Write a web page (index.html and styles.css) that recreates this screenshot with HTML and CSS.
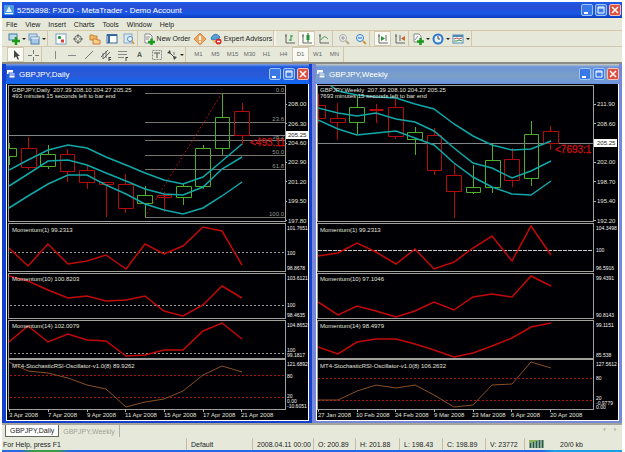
FILE: index.html
```html
<!DOCTYPE html>
<html lang="en">
<head>
<meta charset="utf-8">
<title>5255898: FXDD - MetaTrader - Demo Account</title>
<link rel="stylesheet" href="styles.css">
</head>
<body>
<div class="app">
  <header class="titlebar">
    <svg class="logo" viewBox="0 0 10 10"><rect width="10" height="10" rx="1" fill="#4a9be0"/><path d="M5 1 8 7H2Z" fill="#d8f0ff"/><path d="M1 8.500H9M3 5 5 7 7 5" stroke="#fff" fill="none"/></svg>
    <h1>5255898: FXDD - MetaTrader - Demo Account</h1>
    <div class="winbtns">
      <button aria-label="Minimize"><svg viewBox="0 0 12 12"><path d="M3 9H7" stroke="#fff" stroke-width="2"/></svg></button>
      <button aria-label="Maximize"><svg viewBox="0 0 12 12"><path d="M3 3H9V9H3ZM3 4H9" stroke="#fff" fill="none"/></svg></button>
      <button class="close" aria-label="Close"><svg viewBox="0 0 12 12"><path d="M3 3 9 9M9 3 3 9" stroke="#fff" stroke-width="1.500"/></svg></button>
    </div>
  </header>

  <nav class="menu">
    <button>File</button><button>View</button><button>Insert</button><button>Charts</button><button>Tools</button><button>Window</button><button>Help</button>
  </nav>

  <div class="toolbar">
    <div class="group">
      <button class="drop" aria-label="New chart"><svg viewBox="0 0 12 12"><rect x="1" y="1" width="8" height="6" fill="#b9d8ee" stroke="#4a7898"/><path d="M4 8H12M8 4V12" stroke="#1c9a1c" stroke-width="2.500"/></svg></button>
      <button class="drop" aria-label="Profiles"><svg viewBox="0 0 12 12"><rect x="1" y="1" width="8" height="6" fill="#cfe2f2" stroke="#6f96b8"/><rect x="3" y="4" width="8" height="7" fill="#a8c8e8" stroke="#5080b0"/><path d="M3 5H11" stroke="#fff"/></svg></button>
    </div>
    <div class="group">
      <button aria-label="Market watch"><svg viewBox="0 0 12 12"><rect x="1" y="1" width="10" height="10" fill="#fff" stroke="#78a0c0"/><path d="M3 4.500H6M4.500 3V6" stroke="#209838" stroke-width="2"/><path d="M6 8H9" stroke="#d84040" stroke-width="3"/></svg></button>
      <button aria-label="Data window"><svg viewBox="0 0 12 12"><circle cx="6" cy="6" r="3.500" fill="none" stroke="#666"/><path d="M6 1V5M6 7V11M1 6H5M7 6H11" stroke="#666"/></svg></button>
      <button aria-label="Navigator"><svg viewBox="0 0 12 12"><path d="M1 2H4L5 3H8V7H1Z" fill="#f0b860" stroke="#c88030"/><path d="M4 6H7L8 7H11V11H4Z" fill="#f8d088" stroke="#d07840"/></svg></button>
      <button aria-label="Terminal"><svg viewBox="0 0 12 12"><rect x="1" y="2" width="10" height="8" fill="#fff" stroke="#3868a0"/><path d="M3 2V10" stroke="#3868a0" stroke-width="2"/><path d="M1 2H11" stroke="#3868a0" stroke-width="2"/></svg></button>
      <button aria-label="Strategy tester"><svg viewBox="0 0 12 12"><rect x="1" y="1" width="8" height="9" fill="#d8e8f4" stroke="#88a8c8"/><circle cx="7" cy="6" r="2.500" fill="#e8f4ff" stroke="#5888b8"/><path d="M9 8 11 11" stroke="#d09838" stroke-width="1.500"/></svg></button>
    </div>
    <div class="group">
      <button class="order"><svg viewBox="0 0 12 12"><path d="M2 1H7L9 3V10H2Z" fill="#fff" stroke="#888"/><path d="M3 4H7M3 6H6" stroke="#888"/><path d="M5 9H12M8.500 5.500V12" stroke="#1c9a1c" stroke-width="2.500"/></svg>New Order</button>
      <button class="sign" aria-label="MetaEditor"><svg viewBox="0 0 12 12"><path d="M6 0 12 6 6 12 0 6Z" fill="#f0a860" stroke="#d08850"/><path d="M6 3V7M6 8V9.500" stroke="#fff" stroke-width="2"/></svg></button>
      <button class="experts"><svg viewBox="0 0 12 12"><path d="M1 5Q5 -2 10 4L8 7H2Z" fill="#58a0d8" stroke="#3878b0"/><path d="M2 7H8V10H4Z" fill="#e8c070"/><circle cx="8.500" cy="8.500" r="3" fill="#d82828"/><path d="M7 8.500H10" stroke="#fff" stroke-width="1.500"/></svg>Expert Advisors</button>
    </div>
    <div class="group grip">
      <button aria-label="Bar chart"><svg viewBox="0 0 12 12"><path d="M2 1V10H11M1 3H3" stroke="#666" fill="none"/><path d="M7 2V8M5 7H7M7 3H9" stroke="#209838" fill="none"/></svg></button>
      <button class="on" aria-label="Candlesticks"><svg viewBox="0 0 12 12"><path d="M2 1V10H11M1 3H3" stroke="#666" fill="none"/><path d="M7 0V9" stroke="#107020"/><rect x="5.500" y="2" width="3" height="5" fill="#209838"/></svg></button>
      <button aria-label="Line chart"><svg viewBox="0 0 12 12"><path d="M2 1V10H11M1 3H3" stroke="#666" fill="none"/><path d="M3 7Q6 1 10 6" stroke="#50a050" fill="none"/></svg></button>
    </div>
    <div class="group tight">
      <button aria-label="Zoom in"><svg viewBox="0 0 12 12"><circle cx="5" cy="5" r="3.500" fill="#eee" stroke="#aaa"/><path d="M3 5H7M5 3V7" stroke="#999"/><path d="M8 8 11 11" stroke="#bba880" stroke-width="2"/></svg></button>
      <button aria-label="Zoom out"><svg viewBox="0 0 12 12"><circle cx="5" cy="5" r="3.500" fill="#d8f0ff" stroke="#4080c8"/><path d="M3 5H7" stroke="#2060c0"/><path d="M8 8 11 11" stroke="#d09838" stroke-width="2"/></svg></button>
    </div>
    <div class="group">
      <button class="on" aria-label="Auto scroll"><svg viewBox="0 0 12 12"><path d="M2 1V10H11M1 3H3M9 2V8" stroke="#666" fill="none"/><path d="M4 3 8 5.500 4 8Z" fill="#209838"/></svg></button>
      <button aria-label="Chart shift"><svg viewBox="0 0 12 12"><path d="M2 1V10H11M1 3H3M6 2V8" stroke="#666" fill="none"/><path d="M11 3 7 5.500 11 8Z" fill="#d06030"/></svg></button>
    </div>
    <div class="group tight">
      <button class="drop" aria-label="Indicators"><svg viewBox="0 0 12 12"><path d="M2 1H7L9 3V9H2Z" fill="#fff" stroke="#888"/><path d="M3 7 6 3" stroke="#888"/><path d="M5 8.500H12M8.500 5V12" stroke="#1c9a1c" stroke-width="2.500"/></svg></button>
      <button class="drop" aria-label="Periods"><svg viewBox="0 0 12 12"><circle cx="6" cy="6" r="4.500" fill="#e8f4ff" stroke="#3078c8" stroke-width="2"/><path d="M6 3V6H8" stroke="#444" fill="none"/></svg></button>
      <button class="drop" aria-label="Templates"><svg viewBox="0 0 12 12"><rect x="1" y="2" width="10" height="8" fill="#fff" stroke="#5088b8"/><path d="M1 3H11" stroke="#5088b8" stroke-width="2"/><path d="M2 6 5 5 7 6 10 5" stroke="#c05040" fill="none"/><path d="M2 8 5 8 7 7 10 8" stroke="#309040" fill="none"/></svg></button>
    </div>
  </div>

  <div class="toolbar second">
    <div class="group">
      <button class="on" aria-label="Cursor"><svg viewBox="0 0 12 12"><path d="M4 1V9L6 7.500 8 11 9 10 7.500 7H10Z" fill="#444"/></svg></button>
      <button aria-label="Crosshair"><svg viewBox="0 0 12 12"><path d="M6.500 1V5M6.500 8V12M1 6.500H5M8 6.500H12" stroke="#777"/></svg></button>
    </div>
    <div class="group">
      <button aria-label="Vertical line"><svg viewBox="0 0 12 12"><path d="M6.500 2V10" stroke="#888"/></svg></button>
      <button aria-label="Horizontal line"><svg viewBox="0 0 12 12"><path d="M2 6.500H10" stroke="#888"/></svg></button>
      <button aria-label="Trendline"><svg viewBox="0 0 12 12"><path d="M2 10 10 2" stroke="#777"/></svg></button>
      <button aria-label="Channel"><svg viewBox="0 0 12 12"><path d="M1 8 8 1M3 10 10 3M3 4V10M6 2V9" stroke="#666"/><path d="M9 8V12M9 8.500H11M9 10.500H11" stroke="#444"/></svg></button>
      <button aria-label="Fibonacci"><svg viewBox="0 0 12 12"><path d="M1 2.500H10M1 5.500H10M1 8.500H7" stroke="#888"/><path d="M9 8V12M9 8.500H11" stroke="#444"/></svg></button>
      <button class="glyph">A</button>
      <button aria-label="Label"><svg viewBox="0 0 12 12"><rect x="1.500" y="1.500" width="9" height="9" fill="none" stroke="#888" stroke-dasharray="2 1"/><path d="M3 4H9M6 4V9" stroke="#555"/></svg></button>
      <button class="drop" aria-label="Arrows"><svg viewBox="0 0 12 12"><path d="M1 4 4 1 5 5ZM11 8 8 11 7 7Z" fill="#444"/><path d="M4 4 8 8" stroke="#444"/><path d="M8 3V6" stroke="#777"/></svg></button>
    </div>
    <div class="group frames">
      <button>M1</button><button>M5</button><button>M15</button><button>M30</button><button>H1</button><button>H4</button><button class="on">D1</button><button>W1</button><button>MN</button>
    </div>
  </div>

  <main class="desk">
    <section class="win active">
      <header class="caption">
        <svg class="logo" viewBox="0 0 10 10"><rect x="1" y="1" width="6" height="4" fill="#fff"/><rect x="3" y="4" width="6" height="5" fill="#fff" stroke="#2a60d8"/><path d="M3 6H9" stroke="#2a60d8"/></svg>
        <h2>GBPJPY,Daily</h2>
        <div class="winbtns">
          <button aria-label="Minimize"><svg viewBox="0 0 12 12"><path d="M3 9H7" stroke="#fff" stroke-width="2"/></svg></button>
          <button aria-label="Maximize"><svg viewBox="0 0 12 12"><path d="M3 3H9V9H3ZM3 4H9" stroke="#fff" fill="none"/></svg></button>
          <button class="close" aria-label="Close"><svg viewBox="0 0 12 12"><path d="M3 3 9 9M9 3 3 9" stroke="#fff" stroke-width="1.500"/></svg></button>
        </div>
      </header>
      <svg class="chart" viewBox="7 84 301 336">
        <defs><clipPath id="cd"><rect x="9" y="86" width="276" height="323"/></clipPath></defs>
        <g class="pane"><rect x="8.500" y="85.500" width="277" height="136"/><rect x="8.500" y="223.500" width="277" height="48"/><rect x="8.500" y="273.500" width="277" height="45"/><rect x="8.500" y="320.500" width="277" height="38"/><rect x="8.500" y="359.500" width="277" height="50"/></g>
        <g clip-path="url(#cd)">
          <path class="price" d="M9 135.500H285"/>
          <path class="fib" d="M145 93.500H285M145 122.500H285M145 140.500H285M145 155.500H285M145 169.500H285M145 217.500H285"/>
          <path class="trend" d="M145 217 222 93"/>
          <path class="up" d="M9.500 143V148M9.500 157V165M9 148.500H16.500V156.500H9M48.500 145V154M48.500 166V169M40.500 154.500H55.500V166.500H40.500ZM145.500 186V195M145.500 203V217M137.500 195.500H152.500V203.500H137.500ZM183.500 184V186M183.500 198V205M176.500 186.500H191.500V197.500H176.500ZM203.500 145V148M203.500 187V189M195.500 148.500H210.500V186.500H195.500ZM222.500 93V117M222.500 149V155M215.500 117.500H229.500V148.500H215.500Z"/>
          <path class="down" d="M28.500 137V148M28.500 168V170M21.500 148.500H36.500V167.500H21.500ZM67.500 149V154M67.500 172V182M60.500 154.500H74.500V171.500H60.500ZM87.500 166V170M87.500 182V189M79.500 170.500H94.500V182.500H79.500ZM106.500 185V217M99.500 182.500H113.500V184.500H99.500ZM125.500 174V184M125.500 208V213M118.500 184.500H133.500V208.500H118.500ZM164.500 192V212M157.500 195.500H171.500V197.500H157.500ZM242.500 103V111M242.500 135V145M234.500 111.500H249.500V135.500H234.500Z"/>
          <polyline class="band" points="9,170 28,160 48,150 68,145 87,148 106,157 126,165 145,173 164,180 183,184 203,177 222,161 242,144"/>
          <polyline class="band" points="9,186 28,174 48,161 68,160 87,165 106,173 126,181 145,189 164,194 183,195 203,187 222,169 242,157"/>
          <polyline class="band" points="9,208 28,196 48,184 68,175 87,175 106,185 126,194 145,204 164,210 183,214 203,208 222,196 242,182"/>
          <text class="timer" x="250" y="146">&lt;493.11</text>
          <path class="level" d="M10 252.500H285M10 305.500H285M10 353.500H285"/>
          <path class="limit" d="M10 375.500H285M10 397.500H285"/>
          <polyline class="mom" points="9,248 28,266 48,244 68,264 87,261 106,255 126,269 145,244 164,254 183,246 203,227 222,231 242,265"/>
          <polyline class="mom" points="9,276 28,281 48,290 68,298 87,296 106,301 126,300 145,296 164,311 183,316 203,305 222,286 242,298"/>
          <polyline class="mom" points="9,342 28,326 48,342 68,334 87,340 106,341 126,356 145,355 164,350 183,350 203,331 222,323 242,339"/>
          <polyline class="sto" points="9,362 28,371 48,373 68,378 87,385 106,389 126,407 145,402 164,399 183,391 203,375 222,366 242,372"/>
        </g>
        <g class="fiblabel"><text x="284" y="92">0.0</text><text x="284" y="121">23.6</text><text x="284" y="139">38.2</text><text x="284" y="154">50.0</text><text x="284" y="168">61.8</text><text x="284" y="216">100.0</text></g>
        <g class="lbl">
          <text x="12" y="92" xml:space="preserve">GBPJPY,Daily  207.39 208.10 204.27 205.25</text><text x="12" y="98">493 minutes 15 seconds left to bar end</text>
          <text x="12" y="232">Momentum(1) 99.2313</text><text x="12" y="281">Momentum(10) 100.8203</text><text x="12" y="328">Momentum(14) 102.0079</text><text x="12" y="368">MT4-StochasticRSI-Oscillator-v1.0(8) 89.9262</text>
          <text x="288" y="106">208.00</text><text x="288" y="126">206.30</text><text x="288" y="145">204.60</text><text x="288" y="164">202.90</text><text x="288" y="184">201.20</text><text x="288" y="203">199.50</text><text x="288" y="223">197.80</text>
          <text x="9" y="417">3 Apr 2008</text><text x="48" y="417">7 Apr 2008</text><text x="87" y="417">9 Apr 2008</text><text x="125" y="417">11 Apr 2008</text><text x="164" y="417">15 Apr 2008</text><text x="203" y="417">17 Apr 2008</text><text x="241" y="417">21 Apr 2008</text>
        </g>
        <g class="lbl scale">
          <text x="287" y="230">101.7651</text><text x="287" y="255">100</text><text x="287" y="270">98.8678</text><text x="287" y="280">103.6121</text><text x="287" y="307">100</text><text x="287" y="317">98.4635</text><text x="287" y="327">104.8652</text><text x="287" y="352">100</text><text x="287" y="357">99.1817</text><text x="287" y="366">121.6892</text><text x="287" y="378">80</text><text x="287" y="398">20</text><text x="287" y="403">0.00</text><text x="287" y="408">-10.6051</text>
        </g>
        <path class="tick" d="M9.500 409V412M48.500 409V412M87.500 409V412M125.500 409V412M164.500 409V412M203.500 409V412M241.500 409V412M286 104.500H287M286 123.500H287M286 143.500H287M286 162.500H287M286 181.500H287M286 201.500H287M286 220.500H287"/>
        <rect class="tag" x="286" y="131" width="22" height="8"/><text class="tagtext" x="288" y="137">205.25</text>
      </svg>
    </section>

    <section class="win">
      <header class="caption">
        <svg class="logo" viewBox="0 0 10 10"><rect x="1" y="1" width="6" height="4" fill="#fff"/><rect x="3" y="4" width="6" height="5" fill="#fff" stroke="#6a90c8"/><path d="M3 6H9" stroke="#6a90c8"/></svg>
        <h2>GBPJPY,Weekly</h2>
        <div class="winbtns">
          <button aria-label="Minimize"><svg viewBox="0 0 12 12"><path d="M3 9H7" stroke="#fff" stroke-width="2"/></svg></button>
          <button aria-label="Maximize"><svg viewBox="0 0 12 12"><path d="M3 3H9V9H3ZM3 4H9" stroke="#fff" fill="none"/></svg></button>
          <button class="close" aria-label="Close"><svg viewBox="0 0 12 12"><path d="M3 3 9 9M9 3 3 9" stroke="#fff" stroke-width="1.500"/></svg></button>
        </div>
      </header>
      <svg class="chart" viewBox="317 84 301 336">
        <defs><clipPath id="cw"><rect x="318" y="86" width="275" height="323"/></clipPath></defs>
        <g class="pane"><rect x="317.500" y="85.500" width="276" height="136"/><rect x="317.500" y="223.500" width="276" height="48"/><rect x="317.500" y="273.500" width="276" height="45"/><rect x="317.500" y="320.500" width="276" height="38"/><rect x="317.500" y="359.500" width="276" height="50"/></g>
        <g clip-path="url(#cw)">
          <path class="price" d="M318 143.500H593"/>
          <path class="up" d="M357.500 95V107M357.500 123V134M349.500 107.500H364.500V122.500H349.500ZM415.500 127V132M415.500 139V155M407.500 132.500H422.500V139.500H407.500ZM473.500 165V187M473.500 192V194M466.500 187.500H480.500V192.500H466.500ZM492.500 143V160M492.500 188V193M485.500 160.500H500.500V187.500H485.500ZM531.500 121V134M531.500 178V186M524.500 134.500H538.500V178.500H524.500Z"/>
          <path class="down" d="M318.500 94V123M318 105.500H325.500V118.500H318M337.500 103V118M337.500 122V140M330.500 118.500H345.500V122.500H330.500ZM376.500 104V123M369.500 109.500H383.500M369.500 110.500H383.500M395.500 98V107M395.500 136V139M388.500 107.500H403.500V136.500H388.500ZM434.500 128V135M434.500 170V175M427.500 135.500H441.500V170.500H427.500ZM454.500 163V175M454.500 192V218M446.500 175.500H461.500V191.500H446.500ZM512.500 148V159M512.500 181V187M504.500 159.500H519.500V180.500H504.500ZM550.500 126V131M550.500 143V150M543.500 131.500H558.500V143.500H543.500Z"/>
          <polyline class="band" points="330,85 338,91 357,95 376,97 396,98 415,104 434,109 454,124 473,136 492,145 512,150 531,149 551,141"/>
          <polyline class="band" points="318,108 338,113 357,116 376,113 396,119 415,122 434,131 454,148 473,163 492,168 512,178 531,171 551,161"/>
          <polyline class="band" points="318,120 338,129 357,135 376,133 396,131 415,138 434,145 454,163 473,177 492,187 512,194 531,195 551,181"/>
          <text class="timer" x="555" y="153">&lt;7693:1</text>
          <path class="level solid" d="M318 250.500H593"/>
          <path class="limit" d="M318 378.500H593M318 400.500H593"/>
          <polyline class="mom" points="318,256 338,253 357,243 376,252 396,264 415,249 434,269 454,262 473,248 492,236 512,261 531,226 551,255"/>
          <polyline class="mom" points="318,302 338,315 357,306 376,311 396,317 415,311 434,302 454,310 473,297 492,294 512,297 531,276 551,286"/>
          <polyline class="mom" points="318,347 338,354 357,342 376,339 396,339 415,344 434,350 454,357 473,353 492,346 512,338 531,327 551,323"/>
          <polyline class="sto" points="318,400 338,400 357,391 376,385 396,388 415,385 434,395 454,407 473,405 492,385 512,384 531,362 551,368"/>
        </g>
        <g class="lbl">
          <text x="320" y="92" xml:space="preserve">GBPJPY,Weekly  207.39 208.10 204.27 205.25</text><text x="320" y="98">7693 minutes 15 seconds left to bar end</text>
          <text x="320" y="232">Momentum(1) 99.2313</text><text x="320" y="281">Momentum(10) 97.1046</text><text x="320" y="328">Momentum(14) 98.4979</text><text x="320" y="368">MT4-StochasticRSI-Oscillator-v1.0(8) 106.2632</text>
          <text x="597" y="106">211.90</text><text x="597" y="126">208.60</text><text x="597" y="164">202.00</text><text x="597" y="184">198.70</text><text x="597" y="203">195.40</text><text x="597" y="223">192.20</text>
          <text x="318" y="417">27 Jan 2008</text><text x="356" y="417">10 Feb 2008</text><text x="395" y="417">24 Feb 2008</text><text x="434" y="417">9 Mar 2008</text><text x="472" y="417">23 Mar 2008</text><text x="511" y="417">6 Apr 2008</text><text x="550" y="417">20 Apr 2008</text>
        </g>
        <g class="lbl scale">
          <text x="596" y="230">104.3498</text><text x="596" y="252">100</text><text x="596" y="270">96.5916</text><text x="596" y="280">99.4391</text><text x="596" y="317">90.8143</text><text x="596" y="327">99.1151</text><text x="596" y="357">85.538</text><text x="596" y="366">127.5612</text><text x="596" y="380">80</text><text x="596" y="400">20</text><text x="596" y="409">0.00</text><text x="596" y="405">-0.9779</text>
        </g>
        <path class="tick" d="M318.500 409V412M357.500 409V412M395.500 409V412M434.500 409V412M473.500 409V412M511.500 409V412M550.500 409V412M594 104.500H596M594 123.500H596M594 162.500H596M594 181.500H596M594 201.500H596M594 220.500H596"/>
        <rect class="tag" x="594" y="139" width="23" height="8"/><text class="tagtext" x="597" y="145">205.25</text>
      </svg>
    </section>
  </main>

  <nav class="tabs">
    <button class="current">GBPJPY,Daily</button><button>GBPJPY,Weekly</button>
    <span class="arrows"><span>‹</span><span>›</span></span>
  </nav>

  <footer class="status">
    <span>For Help, press F1</span><span>Default</span><span>2008.04.11 00:00</span><span>O: 200.89</span><span>H: 201.88</span><span>L: 198.43</span><span>C: 198.89</span><span>V: 23772</span>
    <span><svg class="signal" viewBox="0 0 16 8"><path d="M1.500 0V8M4.500 0V8M7.500 0V8M10.500 0V8M13.500 0V8" stroke="#245c48" stroke-width="2"/><path d="M1.500 0V3M4.500 0V2M7.500 0V1" stroke="#8cb840" stroke-width="2"/></svg></span>
    <span class="traffic">20/0 kb</span>
  </footer>
  <div class="taskbar"></div>
</div>
</body>
</html>
```
FILE: styles.css
```css
* { box-sizing: border-box; }

body {
  margin: 0;
  background: #fff;
  font: 7px/9px "Liberation Sans", Arial, sans-serif;
  color: #222;
}

.app {
  margin: 2px 3px 0 2px;
  background: #e6e9da;
}

button {
  display: flex;
  align-items: center;
  justify-content: center;
  margin: 0;
  padding: 0;
  border: 0;
  background: none;
  font: inherit;
  color: inherit;
}

h1, h2 {
  margin: 0;
  flex: 1;
  font-size: 8px;
  font-weight: normal;
  color: #fff;
}

/* Title bars */
.titlebar, .caption {
  display: flex;
  align-items: center;
  gap: 3px;
}

.titlebar {
  height: 16px;
  padding: 0 1px 0 2px;
  background: linear-gradient(#1c5ce8, #2a4cd4 30%, #1a58e4 70%, #0a3cc0);
}

.logo { width: 10px; height: 10px; }

.winbtns { display: flex; gap: 2px; }

.winbtns button {
  width: 12px;
  height: 12px;
  border: 1px solid #9cc4f4;
  border-radius: 2px;
  background: #3a78e8;
}

.winbtns .close { background: #dc5040; border-color: #f4c0b8; }
.winbtns svg { width: 12px; height: 12px; flex: none; }

/* Menu */
.menu {
  display: flex;
  gap: 8px;
  height: 13px;
  padding: 0 4px;
  border-bottom: 1px solid #d8c8a8;
}

/* Toolbars */
.toolbar {
  display: flex;
  height: 16px;
  border-bottom: 1px solid #d4c8b0;
}

.toolbar.second { height: 17px; border-bottom: 2px solid #8c8c84; }

.group {
  display: flex;
  padding-left: 4px;
  border-right: 1px solid #d4c4a8;
}

.group:first-child { padding-left: 5px; }
.group.tight { padding-left: 2px; }
.group.grip { padding-left: 5px; border-left: 2px solid #f4f4ec; }

.group button { width: 17px; flex: none; }
.group svg { width: 12px; height: 12px; flex: none; }
.group .on { background: #fafaf4; border: 1px solid #d4c8b0; }
.group .drop { width: 20px; justify-content: flex-start; padding-left: 1px; gap: 2px; }
.group .drop::after { content: ""; border: 2px solid transparent; border-top-color: #222; border-bottom: 0; }
.group .order { width: 49px; gap: 2px; }
.group .sign { width: 18px; }
.group .experts { width: 64px; gap: 2px; }
.glyph { font-weight: bold; color: #555; }
.frames { font-size: 6px; color: #666; }

/* Chart windows */
.desk {
  display: grid;
  grid-template-columns: 1fr 1fr;
  background: #a8a8a0;
}

.win {
  border: solid #7888d8;
  border-width: 0 3px 2px 4px;
  background: #fff;
}

.win.active { border-color: #1440d0; }

.caption {
  height: 20px;
  background: linear-gradient(#c8ccc0, #6c94d8 15%, #7ca0c8 60%, #6c94e0);
}

.active .caption { background: linear-gradient(#80a0e0, #1c58e0 15%, #2c58d4 50%, #1068f4); }

.chart {
  display: block;
  width: calc(100% - 2px);
  margin: 0 1px 1px;
  background: #000004;
  font-size: 6px;
}

.pane rect { fill: none; stroke: #a0a09c; }
.price { stroke: #80868c; }
.fib { stroke: #74746c; }
.trend { stroke: #a81010; stroke-dasharray: 2 2; }
.up { stroke: #4fae28; fill: none; }
.down { stroke: #b40c0c; fill: none; }
.band { stroke: #10a8a8; stroke-width: 1.5; fill: none; }
.mom { stroke: #c40808; stroke-width: 1.5; fill: none; }
.sto { stroke: #8a5028; fill: none; }
.level { stroke: #9c9c98; stroke-dasharray: 2 2; }
.level.solid { stroke: #c8c8c4; stroke-dasharray: 4 1; }
.limit { stroke: #b01010; stroke-dasharray: 2 2; }
.tick { stroke: #b4b4b0; }
.lbl { fill: #e0e0dc; }
.scale { font-size: 5px; fill: #f4f4f0; }
.fiblabel { fill: #94948c; text-anchor: end; }
.timer { fill: #cc1010; stroke: #cc1010; stroke-width: 0.3; font-size: 10px; }
.tag { fill: #fff; }
.tagtext { fill: #222; }

/* Chart tabs */
.tabs {
  display: flex;
  height: 15px;
  padding: 0 2px 1px 3px;
  border-top: 2px solid #a4a49c;
}

.tabs button {
  padding: 0 4px;
  border-right: 1px solid #b0b0a4;
  color: #a0a094;
}

.tabs .current {
  border: 1px solid #66665c;
  border-top: 0;
  background: #fff;
  color: #222;
}

.arrows { display: flex; gap: 8px; margin-left: auto; padding-right: 4px; color: #888; }

/* Status bar */
.status {
  display: grid;
  grid-template-columns: 1fr 66px 61px 42px 44px 43px 43px 39px 26px 72px;
  height: 12px;
}

.status span {
  display: flex;
  align-items: center;
  padding-left: 4px;
  border-left: 1px solid #c8bca4;
}

.status span:first-child { padding-left: 1px; border-left: 0; }
.status .traffic { padding-left: 10px; border-left: 0; }
.signal { width: 16px; height: 8px; }

.taskbar {
  height: 2px;
  background: linear-gradient(90deg, #2868e0 3%, #3c9c48 5% 9%, #2468e8 11% 87%, #18a0e8 89%);
}
```
